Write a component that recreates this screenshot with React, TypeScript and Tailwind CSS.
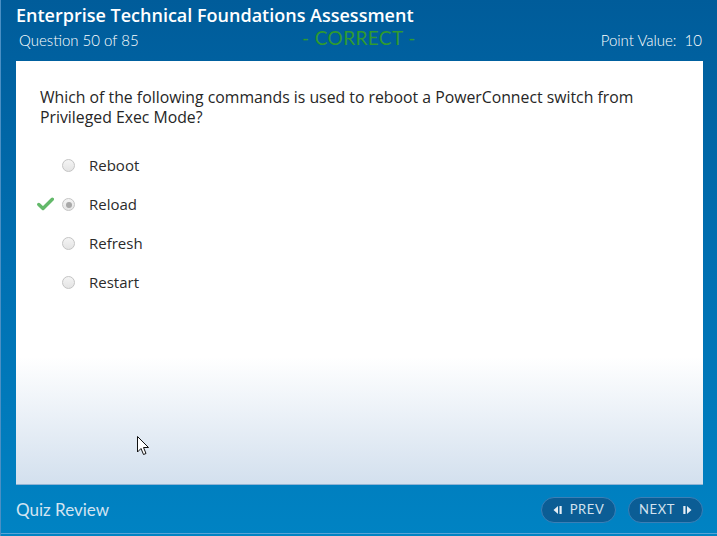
import React from "react";

function Radio({ checked }: { checked?: boolean }) {
  return (
    <span className="relative flex h-[13px] w-[13px] items-center justify-center rounded-full border border-[#c4c4c4] bg-gradient-to-b from-[#f4f4f4] to-[#e4e4e4]">
      {checked && <span className="h-[6px] w-[6px] rounded-full bg-[#a8a8a8]" />}
    </span>
  );
}

export default function App() {
  const options = ["Reboot", "Reload", "Refresh", "Restart"];
  return (
    <div
      className="relative flex h-[536px] w-[717px] flex-col overflow-hidden bg-gradient-to-b from-[#005c9a] via-[#0070b2] to-[#0083c3] border-l border-l-[#4a8fc4]"
      style={{ fontFamily: "Lato, 'Open Sans', sans-serif" }}
    >
      {/* header */}
      <div className="flex h-[61px] flex-col px-[15px] pt-[3px]">
        <div className="text-[18px] font-semibold leading-[24px] text-white" style={{ fontFamily: "'Open Sans', sans-serif" }}>
          Enterprise Technical Foundations Assessment
        </div>
        <div className="relative mt-[3px] flex items-center justify-between pl-[3px]">
          <span className="text-[15px] font-light leading-[20px] text-white">Question 50 of 85</span>
          <span className="absolute left-[286px] top-[-4px] text-[19px] font-normal leading-[24px] tracking-[0.4px] text-[#2f9a2f]">- CORRECT -</span>
          <span className="text-[15px] font-light leading-[20px] text-white">Point Value:&nbsp; 10</span>
        </div>
      </div>

      {/* panel */}
      <div className="relative ml-[15px] mr-[14px] h-[424px] border-b border-b-[#8fb3d4] bg-gradient-to-b from-white from-[70%] to-[#d3e0ee]">
        <div className="flex flex-col px-[24px] pt-[27px] text-[15.8px] leading-[19.5px] text-[#262626]" style={{ fontFamily: "'Open Sans', sans-serif" }}>
          <span>Which of the following commands is used to reboot a PowerConnect switch from</span>
          <span>Privileged Exec Mode?</span>
        </div>
        <div className="mt-[29px] flex flex-col gap-[20px]" style={{ fontFamily: "'Open Sans', sans-serif" }}>
          {options.map((o, i) => (
            <div key={o} className="relative flex h-[19px] items-center">
              {i === 1 && (
                <svg className="absolute left-[21px] top-[2px]" width="17" height="14" viewBox="0 0 17 14">
                  <path d="M1.8 7.5 L6 11.5 L15.3 2.3" fill="none" stroke="#63b96a" strokeWidth="3.4" strokeLinecap="round" strokeLinejoin="round" />
                </svg>
              )}
              <span className="ml-[46px]">
                <Radio checked={i === 1} />
              </span>
              <span className="ml-[14px] text-[15px] text-[#2b2b2b]">{o}</span>
            </div>
          ))}
        </div>
        {/* mouse cursor */}
        <svg className="absolute left-[121px] top-[375px]" width="14" height="21" viewBox="0 0 14 21">
          <path d="M0.5 0.5 L0.5 16 L4 12.5 L6.5 18.5 L9 17.5 L6.5 11.5 L11.5 11.5 Z" fill="white" stroke="#111" strokeWidth="1" strokeLinejoin="miter" />
        </svg>
      </div>

      {/* footer */}
      <div className="flex flex-1 items-center justify-between pl-[15px] pr-[14px] pb-[2px]">
        <span className="text-[17px] font-normal text-[#d3e4f1]">Quiz Review</span>
        <div className="flex gap-[12px]">
          <button className="flex h-[26px] w-[75px] items-center justify-center gap-[7px] rounded-full border border-[#3b7fb6] bg-[#0b5d95] text-[13px] font-normal tracking-[0.6px] text-[#d3e2ef]">
            <svg width="10" height="10" viewBox="0 0 10 10">
              <path d="M5 1 L0.5 5 L5 9 Z" fill="#e6eef5" />
              <rect x="6.5" y="1" width="2.2" height="8" fill="#e6eef5" />
            </svg>
            PREV
          </button>
          <button className="flex h-[26px] w-[75px] items-center justify-center gap-[7px] rounded-full border border-[#3b7fb6] bg-[#0b5d95] text-[13px] font-normal tracking-[0.6px] text-[#d3e2ef]">
            NEXT
            <svg width="10" height="10" viewBox="0 0 10 10">
              <rect x="1.3" y="1" width="2.2" height="8" fill="#e6eef5" />
              <path d="M5 1 L9.5 5 L5 9 Z" fill="#e6eef5" />
            </svg>
          </button>
        </div>
      </div>
      <div className="absolute bottom-[2px] left-0 right-0 h-px bg-[#5aa3d6]" />
    </div>
  );
}
